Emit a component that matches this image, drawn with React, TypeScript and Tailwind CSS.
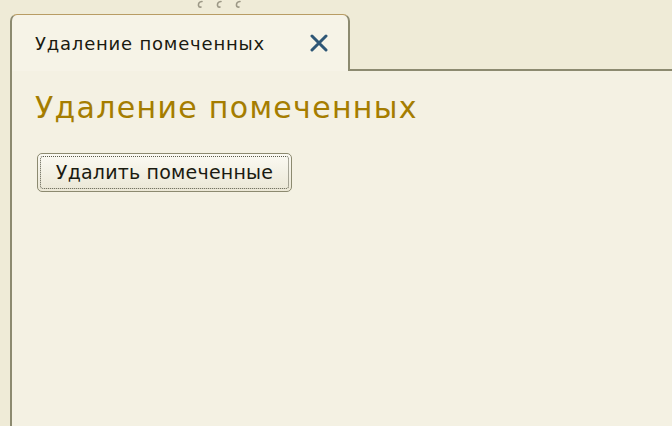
export default function App() {
  return (
    <div className="w-[672px] h-[426px] bg-[#efebd7] flex flex-col overflow-hidden" style={{ fontFamily: '"DejaVu Sans", sans-serif' }}>
      {/* grip */}
      <div className="h-[14px] flex items-start">
        <svg className="ml-[196px]" width="50" height="9" viewBox="0 0 50 9">
          <path d="M6 1.5 Q2 2 2.5 5.5 Q3 7.5 5 7" stroke="#9c9886" strokeWidth="1.6" fill="none" strokeLinecap="round" />
          <path d="M25 1.5 Q21 2 21.5 5.5 Q22 7.5 24 7" stroke="#9c9886" strokeWidth="1.6" fill="none" strokeLinecap="round" />
          <path d="M44 1.5 Q40 2 40.5 5.5 Q41 7.5 43 7" stroke="#9c9886" strokeWidth="1.6" fill="none" strokeLinecap="round" />
        </svg>
      </div>

      <div className="flex-1 flex flex-col pl-[10px]">
        {/* tab strip */}
        <div className="flex h-[57px]">
          <div className="w-[340px] bg-[#f6f3e7] border-t border-l-2 border-r-2 border-t-[#b89c64] border-l-[#8c8a70] border-r-[#8c8a70] rounded-t-[7px] flex items-center pl-[23px] pr-[20px]">
            <span className="text-[18px] text-[#1a1a10] tracking-[0.8px] pt-[1px]">Удаление помеченных</span>
            <svg className="ml-auto" width="18" height="18" viewBox="0 0 18 18">
              <path d="M2 2 L16 16 M16 2 L2 16" stroke="#2e5676" strokeWidth="3" strokeLinecap="round" />
            </svg>
          </div>
          <div className="flex-1 border-b-2 border-b-[#8c8a70]" />
        </div>

        {/* content */}
        <div className="flex-1 bg-[#f4f1e3] border-l-2 border-l-[#8c8a70] pl-[23px] pt-[22px]">
          <h1 className="text-[30px] leading-none text-[#a57d00] tracking-[1.3px]">Удаление помеченных</h1>
          <button className="mt-[30px] ml-[2px] w-[255px] h-[39px] rounded-[5px] border border-[#8c8a70] bg-gradient-to-b from-[#fbfaf3] to-[#ebe7d6] p-[2px]">
            <div className="h-full w-full rounded-[3px] border border-dotted border-[#5a5a4a] flex items-center justify-center text-[19px] tracking-[0.2px] text-[#1a1a10]">
              Удалить помеченные
            </div>
          </button>
        </div>
      </div>
    </div>
  );
}
